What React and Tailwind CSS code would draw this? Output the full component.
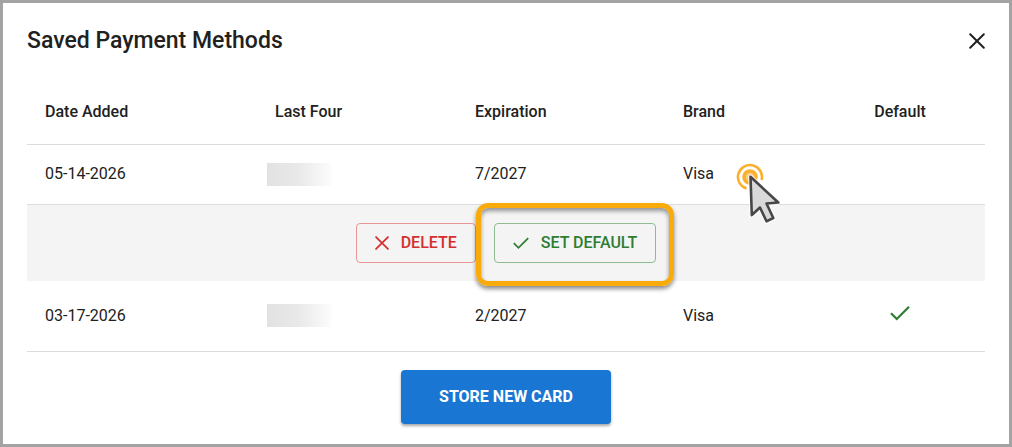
import { Fragment, useState } from 'react';

const CARDS = [
  { id: 1, dateAdded: '05-14-2026', expiration: '7/2027', brand: 'Visa', isDefault: false },
  { id: 2, dateAdded: '03-17-2026', expiration: '2/2027', brand: 'Visa', isDefault: true },
];

function CloseIcon({ className }) {
  return (
    <svg viewBox="0 0 16 16" fill="none" stroke="currentColor" strokeWidth="2" strokeLinecap="round" className={className} aria-hidden="true">
      <path d="M1.2 1.2 14.8 14.8M14.8 1.2 1.2 14.8" />
    </svg>
  );
}

function CheckIcon({ className }) {
  return (
    <svg viewBox="0 0 20 16" fill="none" stroke="currentColor" strokeWidth="2.2" className={className} aria-hidden="true">
      <path d="M1 8.2 6.8 14 19 1.8" />
    </svg>
  );
}

function ClickPointer() {
  return (
    <svg viewBox="0 0 46 62" fill="none" className="pointer-events-none absolute left-[52px] top-4 h-[62px] w-[46px]" aria-hidden="true">
      <path d="M11.5 26.5A12 12 0 1 1 26.6 18" stroke="#fbb02d" strokeWidth="2.6" />
      <circle cx="15" cy="15" r="6" fill="#f5cf8a" stroke="#fbb02d" strokeWidth="3.6" />
      <path d="M15.5 14.8 43.3 40.5 31.5 41.5 38.3 56 31.5 59.3 25 45.5 16.8 53Z" fill="#d9d9d9" stroke="#fff" strokeWidth="5" strokeLinejoin="round" strokeOpacity="0.7" />
      <path d="M15.5 14.8 43.3 40.5 31.5 41.5 38.3 56 31.5 59.3 25 45.5 16.8 53Z" fill="#d9d9d9" stroke="#474747" strokeWidth="2.6" strokeLinejoin="round" />
    </svg>
  );
}

function CardRow({ card, selected, onSelect }) {
  const height = selected ? 'h-[60px]' : 'h-[70px]';

  return (
    <tr onClick={onSelect} className={`${height} cursor-pointer border-b border-[#dcdcdc]`}>
      <td className="px-[18px]">{card.dateAdded}</td>
      <td className="px-[18px]">
        <div className="h-[23px] w-16 bg-linear-to-r from-[#e2e2e2] via-[#e9e9e9] to-[#fcfcfc]" />
      </td>
      <td className="px-[18px]">{card.expiration}</td>
      <td className="px-[18px]">
        <div className="relative -my-4 py-4">
          {card.brand}
          {selected && <ClickPointer />}
        </div>
      </td>
      <td className="pb-1.5 text-[#2e7d32]">
        {card.isDefault && <CheckIcon className="mx-auto h-4 w-5" />}
      </td>
    </tr>
  );
}

function CardActions() {
  const buttonClass = 'flex h-10 items-center gap-3 rounded border px-[18px] text-base font-medium';

  return (
    <tr className="bg-[#f4f4f4]">
      <td colSpan={5} className="h-[77px]">
        <div className="flex justify-center gap-[18px]">
          <button type="button" className={`${buttonClass} border-[#ea9696] text-[#d32f2f]`}>
            <CloseIcon className="size-[14px]" />
            DELETE
          </button>
          <div className="relative">
            <button type="button" className={`${buttonClass} border-[#8fbb91] text-[#2e7d32]`}>
              <CheckIcon className="h-[14px] w-4" />
              SET DEFAULT
            </button>
            <div className="pointer-events-none absolute -inset-x-[18px] -bottom-[23px] -top-5 rounded-xl border-[5px] border-[#f9ab0b] shadow-[0_3px_4px_rgba(0,0,0,0.45),inset_0_3px_4px_rgba(0,0,0,0.4)]" />
          </div>
        </div>
      </td>
    </tr>
  );
}

export default function App() {
  const [selectedId, setSelectedId] = useState(1);

  return (
    <div className="min-h-screen border-[3px] border-[#a3a3a3] bg-white px-6 py-5 font-['Roboto',sans-serif] text-base text-[#212121]">
      <div className="flex h-9 items-center justify-between">
        <h1 className="text-[23px] leading-9 font-medium">Saved Payment Methods</h1>
        <button type="button" aria-label="Close">
          <CloseIcon className="size-4" />
        </button>
      </div>

      <table className="mt-[22px] w-full table-fixed border-collapse">
        <colgroup>
          <col className="w-[222px]" />
          <col className="w-[208px]" />
          <col className="w-[208px]" />
          <col className="w-[150px]" />
          <col className="w-[170px]" />
        </colgroup>
        <thead>
          <tr className="h-[63px] border-b border-[#dcdcdc] text-left">
            <th className="px-[18px] font-medium">Date Added</th>
            <th className="px-[26px] font-medium">Last Four</th>
            <th className="px-[18px] font-medium">Expiration</th>
            <th className="px-[18px] font-medium">Brand</th>
            <th className="text-center font-medium">Default</th>
          </tr>
        </thead>
        <tbody>
          {CARDS.map((card) => (
            <Fragment key={card.id}>
              <CardRow card={card} selected={card.id === selectedId} onSelect={() => setSelectedId(card.id)} />
              {card.id === selectedId && <CardActions />}
            </Fragment>
          ))}
        </tbody>
      </table>

      <div className="mt-[18px] flex justify-center">
        <button type="button" className="h-[54px] rounded bg-[#1976d2] px-[38px] font-bold text-white shadow-[0_2px_3px_rgba(0,0,0,0.35)]">
          STORE NEW CARD
        </button>
      </div>
    </div>
  );
}
